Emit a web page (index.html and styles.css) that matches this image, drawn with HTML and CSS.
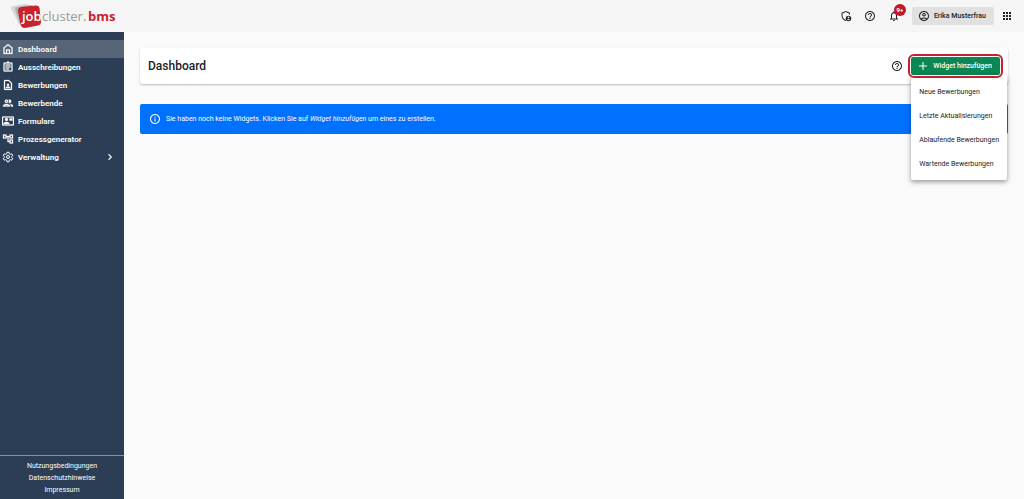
FILE: index.html
```html
<!DOCTYPE html>
<html lang="de">

<head>
  <meta charset="UTF-8">
  <title>jobcluster.bms - Dashboard</title>
  <link rel="stylesheet" href="styles.css">
</head>

<body>
  <header class="topbar">
    <a href="#" class="logo" aria-label="jobcluster.bms">
      <svg width="108" height="26" viewBox="0 0 108 26">
        <path d="M3 3 L15 1 Q18 1 18 4 L18 15 L9 21 Q7 18 6 15 L1 6 Q0 4 3 3Z" fill="#d8d8d8" />
        <path d="M7 4 L20 2 Q23 2 23 5 L22 20 L12 22 Q9 21 9 18 L5 7 Q5 4 7 4Z" fill="#b0b0b0" />
        <path d="M11 4 L26 2.500 Q29 2.500 29.500 5 L31 19 Q31 22 28 22.500 L15 25 Q11 25 10.500 21 L8 8 Q8 4.500 11 4Z" fill="#c8232c" />
        <text x="12" y="18" class="logo-job">job</text>
        <text x="32" y="18" class="logo-cluster">cluster.</text>
        <text x="78" y="18" class="logo-bms">bms</text>
      </svg>
    </a>

    <div class="topbar-actions">
      <button type="button" class="icon-btn" aria-label="Datenschutz">
        <svg viewBox="0 0 24 24"><path d="M20 9V5.500L11.500 2 3 5.500V11c0 5 3.500 9.700 8.500 11l1-.4-1.200-1.900C7.600 18.500 5 15 5 11V6.900l6.500-2.700L18 6.900V9z" /><path fill-rule="evenodd" d="M17 11.500a5.500 5.500 0 1 0 0 11 5.500 5.500 0 0 0 0-11zm0 1.700a1.700 1.700 0 1 1 0 3.400 1.700 1.700 0 0 1 0-3.400zm0 4.600c1.300 0 2.300.5 3 1.300a3.700 3.700 0 0 1-6 0c.7-.8 1.700-1.300 3-1.300z" /></svg>
      </button>
      <button type="button" class="icon-btn" aria-label="Hilfe">
        <svg viewBox="0 0 24 24"><path d="M11 18h2v-2h-2v2zm1-16C6.480 2 2 6.480 2 12s4.480 10 10 10 10-4.480 10-10S17.520 2 12 2zm0 18c-4.410 0-8-3.590-8-8s3.590-8 8-8 8 3.590 8 8-3.590 8-8 8zm0-14c-2.210 0-4 1.790-4 4h2c0-1.100.9-2 2-2s2 .9 2 2c0 2-3 1.750-3 5h2c0-2.250 3-2.500 3-5 0-2.210-1.790-4-4-4z" /></svg>
      </button>
      <button type="button" class="icon-btn" aria-label="Benachrichtigungen">
        <svg viewBox="0 0 24 24"><path d="M12 22c1.100 0 2-.9 2-2h-4c0 1.100.9 2 2 2zm6-6v-5c0-3.070-1.630-5.640-4.500-6.320V4c0-.830-.670-1.500-1.500-1.500s-1.500.670-1.500 1.500v.680C7.640 5.360 6 7.920 6 11v5l-2 2v1h16v-1l-2-2zm-2 1H8v-6c0-2.480 1.510-4.500 4-4.500s4 2.020 4 4.500v6z" /></svg>
        <span class="badge">9+</span>
      </button>
      <button type="button" class="user-btn">
        <svg viewBox="0 0 24 24"><path d="M12 2C6.480 2 2 6.480 2 12s4.480 10 10 10 10-4.480 10-10S17.520 2 12 2zM7.350 18.500C8.660 17.560 10.260 17 12 17s3.340.560 4.650 1.500C15.340 19.440 13.740 20 12 20s-3.340-.560-4.650-1.500zm10.790-1.380C16.450 15.800 14.320 15 12 15s-4.450.8-6.140 2.120C4.700 15.730 4 13.950 4 12c0-4.420 3.580-8 8-8s8 3.580 8 8c0 1.950-.7 3.730-1.860 5.120zM12 6c-1.930 0-3.500 1.570-3.500 3.500S10.070 13 12 13s3.500-1.570 3.500-3.500S13.930 6 12 6zm0 5c-.830 0-1.500-.670-1.500-1.500S11.170 8 12 8s1.500.670 1.500 1.500S12.830 11 12 11z" /></svg>
        Erika Musterfrau
      </button>
      <button type="button" class="icon-btn apps-btn" aria-label="Apps">
        <svg viewBox="0 0 24 24"><path d="M4 8h4V4H4v4zm6 12h4v-4h-4v4zm-6 0h4v-4H4v4zm0-6h4v-4H4v4zm6 0h4v-4h-4v4zm6-10v4h4V4h-4zm-6 4h4V4h-4v4zm6 6h4v-4h-4v4zm0 6h4v-4h-4v4z" /></svg>
      </button>
    </div>
  </header>

  <div class="layout">
    <aside class="sidebar">
      <nav class="nav">
        <a href="#" class="nav-item active">
          <svg viewBox="0 0 24 24"><path d="M12 2L3 9v13h18V9l-9-7zm7 18h-3v-7H8v7H5V10l7-5.400L19 10v10zm-9 0v-5h4v5h-4z" /></svg>
          Dashboard
        </a>
        <a href="#" class="nav-item">
          <svg viewBox="0 0 24 24"><path d="M7 15h7v2H7zm0-4h10v2H7zm0-4h10v2H7zm12-4h-4.180C14.400 1.840 13.300 1 12 1c-1.300 0-2.400.840-2.820 2H5c-1.100 0-2 .9-2 2v14c0 1.100.9 2 2 2h14c1.100 0 2-.9 2-2V5c0-1.100-.9-2-2-2zm0 16H5V5h14v14z" /></svg>
          Ausschreibungen
        </a>
        <a href="#" class="nav-item">
          <svg viewBox="0 0 24 24"><path d="M14 2H6c-1.100 0-2 .9-2 2v16c0 1.100.9 2 2 2h12c1.100 0 2-.9 2-2V8l-6-6zm4 18H6V4h7l5 5v11zM12 9.500a2.300 2.300 0 1 0 0 4.600 2.300 2.300 0 0 0 0-4.600zM7.500 18.500h9v-1c0-1.600-3-2.600-4.500-2.600s-4.500 1-4.500 2.600z" /></svg>
          Bewerbungen
        </a>
        <a href="#" class="nav-item">
          <svg viewBox="0 0 24 24"><path d="M9 13.750c-2.340 0-7 1.170-7 3.500V19h14v-1.750c0-2.330-4.660-3.500-7-3.500zM4.340 17c.840-.580 2.870-1.250 4.660-1.250s3.820.670 4.660 1.250H4.340zM9 12c1.930 0 3.500-1.570 3.500-3.500S10.930 5 9 5 5.500 6.570 5.500 8.500 7.070 12 9 12zm0-5c.830 0 1.500.670 1.500 1.500S9.830 10 9 10s-1.500-.670-1.500-1.500S8.170 7 9 7zm7.040 6.810c1.160.840 1.960 1.960 1.960 3.440V19h4v-1.750c0-2.020-3.500-3.170-5.960-3.440zM15 12c1.930 0 3.500-1.570 3.500-3.500S16.930 5 15 5c-.540 0-1.040.130-1.500.350.630.890 1 1.980 1 3.150s-.370 2.260-1 3.150c.460.220.960.350 1.500.350z" /></svg>
          Bewerbende
        </a>
        <a href="#" class="nav-item">
          <svg viewBox="0 0 24 24"><path d="M22 3H2C.9 3 0 3.900 0 5v14c0 1.100.9 2 2 2h20c1.100 0 2-.9 2-2V5c0-1.100-.9-2-2-2zm0 16H2V5h20v14zM9 12c1.650 0 3-1.350 3-3s-1.350-3-3-3-3 1.350-3 3 1.350 3 3 3zm6 5.600c0-2.500-3.970-3.580-6-3.580s-6 1.080-6 3.580V18h12v-.4zM15 7h6v4h-6z" /></svg>
          Formulare
        </a>
        <a href="#" class="nav-item">
          <svg viewBox="0 0 24 24"><path d="M22 11V3h-7v3H9V3H2v8h7V8h2v10h4v3h7v-8h-7v3h-2V8h2v3h7zM7 9H4V5h3v4zm10 6h3v4h-3v-4zm0-10h3v4h-3V5z" /></svg>
          Prozessgenerator
        </a>
        <a href="#" class="nav-item">
          <svg viewBox="0 0 24 24"><path class="gear" d="M10 2.500h4l.6 3 2 1.200 2.900-1 2 3.500-2.300 2v1.600l2.300 2-2 3.500-2.900-1-2 1.200-.6 3h-4l-.6-3-2-1.200-2.900 1-2-3.500 2.300-2v-1.600l-2.300-2 2-3.500 2.900 1 2-1.200z" /><circle class="gear" cx="12" cy="12" r="3" /></svg>
          Verwaltung
          <svg class="chevron" viewBox="0 0 24 24"><path d="M10 6L8.590 7.410 13.170 12l-4.580 4.590L10 18l6-6z" /></svg>
        </a>
      </nav>
      <footer class="sidebar-footer">
        <a href="#">Nutzungsbedingungen</a>
        <a href="#">Datenschutzhinweise</a>
        <a href="#">Impressum</a>
      </footer>
    </aside>

    <main class="content">
      <section class="page-header">
        <h1>Dashboard</h1>
        <button type="button" class="icon-btn" aria-label="Hilfe zum Dashboard">
          <svg viewBox="0 0 24 24"><path d="M11 18h2v-2h-2v2zm1-16C6.480 2 2 6.480 2 12s4.480 10 10 10 10-4.480 10-10S17.520 2 12 2zm0 18c-4.410 0-8-3.590-8-8s3.590-8 8-8 8 3.590 8 8-3.590 8-8 8zm0-14c-2.210 0-4 1.790-4 4h2c0-1.100.9-2 2-2s2 .9 2 2c0 2-3 1.750-3 5h2c0-2.250 3-2.500 3-5 0-2.210-1.790-4-4-4z" /></svg>
        </button>
        <div class="dropdown">
          <button type="button" class="btn-add">
            <svg viewBox="0 0 24 24"><path d="M20 13h-7v7h-2v-7H4v-2h7V4h2v7h7v2z" /></svg>
            Widget hinzufügen
          </button>
          <div class="menu">
            <button type="button">Neue Bewerbungen</button>
            <button type="button">Letzte Aktualisierungen</button>
            <button type="button">Ablaufende Bewerbungen</button>
            <button type="button">Wartende Bewerbungen</button>
          </div>
        </div>
      </section>

      <div class="alert">
        <svg viewBox="0 0 24 24"><path d="M11 7h2v2h-2zm0 4h2v6h-2zm1-9C6.480 2 2 6.480 2 12s4.480 10 10 10 10-4.480 10-10S17.520 2 12 2zm0 18c-4.410 0-8-3.590-8-8s3.590-8 8-8 8 3.590 8 8-3.590 8-8 8z" /></svg>
        <p>Sie haben noch keine Widgets. Klicken Sie auf <em>Widget hinzufügen</em> um eines zu erstellen.</p>
      </div>
    </main>
  </div>
</body>

</html>
```

FILE: styles.css
```css
* {
  box-sizing: border-box;
}

body {
  margin: 0;
  min-height: 100vh;
  display: flex;
  flex-direction: column;
  font-family: Roboto, Arial, sans-serif;
  font-size: 7px;
  color: #222;
  background-color: #fafafa;
}

button {
  font: inherit;
  color: inherit;
  border: none;
  padding: 0;
  background: none;
  cursor: pointer;
}

a {
  color: inherit;
  text-decoration: none;
}

svg {
  flex: none;
  fill: currentColor;
}

/* top bar */
.topbar {
  display: flex;
  align-items: center;
  justify-content: space-between;
  height: 32px;
  padding: 0 11px 0 10px;
  background-color: #f5f5f5;
}

.logo svg {
  display: block;
}

.logo-job,
.logo-cluster,
.logo-bms {
  font-family: "Open Sans", sans-serif;
  font-size: 13px;
}

.logo-job {
  font-weight: 600;
  fill: #fff;
}

.logo-cluster {
  fill: #9a9a9a;
}

.logo-bms {
  font-weight: bold;
  fill: #c8232c;
}

.topbar-actions {
  display: flex;
  align-items: center;
  gap: 12px;
}

.icon-btn {
  position: relative;
  display: flex;
}

.icon-btn svg,
.user-btn svg {
  width: 12px;
  height: 12px;
}

.apps-btn {
  margin-left: -5px;
}

.badge {
  position: absolute;
  top: -6px;
  left: 6px;
  width: 12px;
  height: 12px;
  border-radius: 50%;
  background-color: #c01826;
  color: #fff;
  font-size: 6px;
  font-weight: bold;
  line-height: 12px;
  text-align: center;
}

.user-btn {
  display: flex;
  align-items: center;
  gap: 4px;
  height: 18px;
  padding: 0 8px 0 6px;
  border-radius: 2px;
  background-color: #e0e0e0;
  font-weight: 500;
}

/* sidebar */
.layout {
  flex: 1;
  display: flex;
}

.sidebar {
  display: flex;
  flex-direction: column;
  justify-content: space-between;
  width: 124px;
  background-color: #2c3e55;
  color: #fff;
}

.nav {
  padding-top: 8px;
}

.nav-item {
  display: flex;
  align-items: center;
  gap: 4px;
  height: 18px;
  padding: 0 8px 0 2px;
  font-size: 8px;
  font-weight: 600;
}

.nav-item svg {
  width: 12px;
  height: 12px;
  stroke: currentColor;
  stroke-width: 0.5;
}

.nav-item .gear {
  fill: none;
  stroke-width: 2;
}

.nav-item .chevron {
  margin-left: auto;
}

.nav-item.active {
  background-color: #566578;
}

.sidebar-footer {
  display: flex;
  flex-direction: column;
  padding: 4px 0 3px;
  border-top: 1px solid #8592a2;
  line-height: 12px;
  text-align: center;
}

/* content */
.content {
  flex: 1;
  padding: 16px;
}

.page-header {
  display: flex;
  align-items: center;
  height: 36px;
  padding: 0 8px;
  border-radius: 2px;
  background-color: #fff;
  box-shadow: 0 1px 2px rgba(0, 0, 0, 0.25);
}

.page-header h1 {
  flex: 1;
  margin: 0;
  font-size: 12px;
  font-weight: 500;
}

.dropdown {
  position: relative;
  margin-left: 8px;
}

/* red marker around the add button */
.dropdown::after {
  content: "";
  position: absolute;
  inset: -3px;
  border: 2px solid #c8202f;
  border-radius: 6px;
  pointer-events: none;
}

.btn-add {
  display: flex;
  align-items: center;
  gap: 4px;
  height: 18px;
  padding: 0 8px 0 6px;
  border-radius: 2px;
  background-color: #0a8754;
  color: #fff;
  font-weight: 500;
}

.btn-add svg {
  width: 12px;
  height: 12px;
}

.menu {
  position: absolute;
  top: 100%;
  right: -7px;
  padding: 5px 0 4px;
  border-radius: 2px;
  background-color: #fff;
  box-shadow: 0 2px 5px rgba(0, 0, 0, 0.4);
}

.menu button {
  display: block;
  width: 100%;
  height: 24px;
  padding: 0 8px;
  text-align: left;
  white-space: nowrap;
}

.alert {
  display: flex;
  align-items: center;
  gap: 5px;
  height: 30px;
  margin-top: 20px;
  padding: 0 9px;
  border-radius: 2px;
  background-color: #0070ff;
  color: #fff;
}

.alert svg {
  width: 12px;
  height: 12px;
}

.alert p {
  margin: 0;
}
```
